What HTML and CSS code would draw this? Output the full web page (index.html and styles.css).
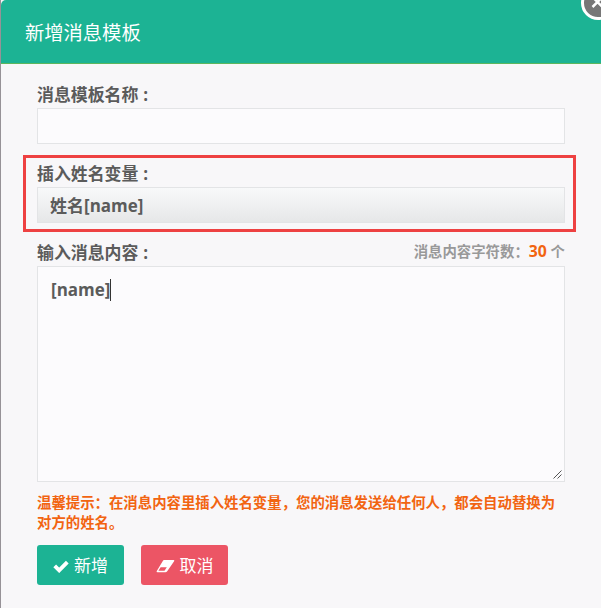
FILE: index.html
```html
<!DOCTYPE html>
<html lang="zh-CN">
<head>
<meta charset="utf-8">
<title>新增消息模板</title>
<link rel="stylesheet" href="styles.css">
</head>
<body>
<main class="dialog">
  <header class="header"><h1 class="title">新增消息模板</h1></header>
  <button class="close" aria-label="关闭"><svg viewBox="0 0 34 34" width="34" height="34"><circle cx="17" cy="17" r="15.5" fill="#777" stroke="#fff" stroke-width="3"/><path d="M11.5 11l10 10M21.5 11l-10 10" stroke="#fff" stroke-width="2.5"/></svg></button>
  <form class="form">
    <div class="field name-field">
      <div class="label">消息模板名称<span class="colon">:</span></div>
      <div class="input"></div>
    </div>
    <div class="field highlight">
      <div class="label">插入姓名变量<span class="colon">:</span></div>
      <div class="input variable">姓名[name]</div>
    </div>
    <div class="field message-field">
      <div class="label-row">
        <div class="label">输入消息内容<span class="colon">:</span></div>
        <div class="count">消息内容字符数：<span class="number">30</span> 个</div>
      </div>
      <div class="input message">[name]<span class="caret"></span><svg class="grip" width="9" height="9" viewBox="0 0 9 9"><path d="M.5 8.500L8.500 .5M4.500 8.500L8.500 4.500" stroke="#555" stroke-width="1"/></svg></div>
    </div>
    <p class="hint">温馨提示：在消息内容里插入姓名变量，您的消息发送给任何人，都会自动替换为<br>对方的姓名。</p>
    <div class="actions">
      <button type="button" class="btn add"><svg class="check" width="16" height="13" viewBox="0 0 16 13"><path d="M1.700 5.800L6.200 10.300L14.300 2.200" fill="none" stroke="#fff" stroke-width="3.900"/></svg>新增</button>
      <button type="button" class="btn cancel"><svg class="eraser" width="19" height="14" viewBox="0 0 19 14"><path d="M8 1h9.500q1.300 0 .6 1.200L11.200 12.200q-.7 1-1.800 1H1.500Q0 13.200.8 12L6.800 2Q7.300 1 8 1z" fill="#fff"/><path d="M4.600 8.200h6.200l-2.300 3.500H2.400z" fill="#ec5565"/></svg>取消</button>
    </div>
  </form>
</main>
</body>
</html>
```
FILE: styles.css
```css
* { box-sizing: border-box; }
body {
  margin: 0;
  height: 614px;
  overflow: hidden;
  background: #fff;
  color: #5b5b5b;
  font: 17px/24px "Open Sans", "Noto Sans CJK SC", sans-serif;
}
.dialog {
  position: relative;
  height: 608px;
  border-left: 1px solid #969297;
  background: #f8f7f9;
  overflow: hidden;
}
.header {
  height: 64px;
  padding: 19px 24px 0;
  background: #1cb394;
  border-bottom: 1px solid #5db65d;
  border-top-left-radius: 5px;
}
.title {
  margin: 0;
  color: #fff;
  font-size: 19.3px;
  font-weight: 400;
  line-height: 28px;
}
.close {
  position: absolute;
  top: -14px;
  right: -14px;
  width: 34px;
  height: 34px;
  padding: 0;
  border: 0;
  background: none;
}
.close svg { display: block; }
.form { padding: 19px 36px 0; }
.label { font-weight: 700; font-size: 16.9px; line-height: 24px; }
.colon { margin-left: 5px; }
.input {
  height: 36px;
  border: 1px solid #e3e4e6;
  background: #fcfbfd;
  font-weight: 700;
}
.name-field .input { margin-top: 1px; }
.highlight {
  height: 77px;
  margin: 11px -11px 0 -14px;
  padding: 4px 8px 0 11px;
  border: 3px solid #ee4142;
}
.highlight .input { margin-top: 1px; }
.variable {
  padding: 6px 12px;
  background: linear-gradient(#f8f9fa, #e6e7e8);
}
.message-field { margin-top: 9px; }
.label-row { display: flex; justify-content: space-between; }
.count { color: #999; font-size: 14.4px; font-weight: 700; line-height: 20px; }
.number { color: #f26411; font-size: 15.8px; }
.message {
  position: relative;
  height: 216px;
  margin-top: 1px;
  padding: 11px 13px;
}
.caret {
  display: inline-block;
  width: 1px;
  height: 22px;
  background: #333;
  vertical-align: -5px;
}
.grip { position: absolute; right: 2px; bottom: 2px; }
.hint {
  margin: 11px 0 0;
  color: #f26411;
  font-size: 14.4px;
  font-weight: 700;
  line-height: 20px;
  white-space: nowrap;
}
.actions { display: flex; gap: 17px; margin-top: 12px; }
.btn {
  display: flex;
  width: 87px;
  height: 40px;
  padding: 1px 0 0;
  align-items: center;
  justify-content: center;
  gap: 5px;
  border: 0;
  border-radius: 3px;
  color: #fff;
  font: 17px/24px "Open Sans", "Noto Sans CJK SC", sans-serif;
}
.add { background: #1cb394; }
.cancel { background: #ec5565; }
.check { margin-top: 1px; }
```
